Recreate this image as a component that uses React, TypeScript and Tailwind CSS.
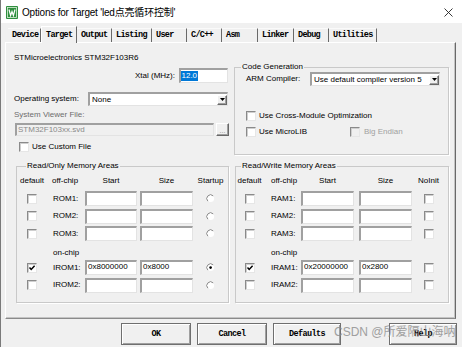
import type { ReactNode } from 'react'

// Keil uVision "Options for Target" dialog, Target tab

const sunken =
  'border-t-2 border-l-2 border-r border-b border-t-[#a0a0a0] border-l-[#a0a0a0] border-r-[#e3e3e3] border-b-[#e3e3e3]'
const raised =
  'border border-t-white border-l-white border-r-[#696969] border-b-[#696969] shadow-[inset_-1px_-1px_0_#a0a0a0]'

const TABS = [
  { label: 'Device', w: 33 },
  { label: 'Target', w: 36, active: true },
  { label: 'Output', w: 35 },
  { label: 'Listing', w: 40 },
  { label: 'User', w: 35 },
  { label: 'C/C++', w: 35 },
  { label: 'Asm', w: 36 },
  { label: 'Linker', w: 36 },
  { label: 'Debug', w: 35 },
  { label: 'Utilities', w: 48 },
]

function Check({ checked, disabled }: { checked?: boolean; disabled?: boolean }) {
  return (
    <span
      className={[
        'relative inline-block w-[10px] h-[10px] shrink-0 border border-t-[#8a8a8a] border-l-[#8a8a8a] border-r-[#e6e6e6] border-b-[#e6e6e6] shadow-[inset_1px_1px_0_#cfcfcf]',
        disabled ? 'bg-[#f0f0f0]' : 'bg-white',
      ].join(' ')}
    >
      {checked && (
        <svg viewBox="0 0 8 8" className="absolute left-0 top-0 w-[8px] h-[8px]">
          <path d="M1.5 3.5 L3.2 5.4 L6.6 1.8" fill="none" stroke="#000" strokeWidth="1.5" />
        </svg>
      )}
    </span>
  )
}

function Radio({ checked }: { checked?: boolean }) {
  return (
    <svg viewBox="0 0 9 9" className="w-[9px] h-[9px]">
      <circle cx="4.5" cy="4.5" r="3.6" fill="#fff" />
      <path d="M7.2 1.9 A3.6 3.6 0 0 0 1.9 7.2" fill="none" stroke="#8a8a8a" strokeWidth="1" />
      {checked && <circle cx="4.6" cy="4.6" r="1.3" fill="#000" />}
    </svg>
  )
}

function Field({ w, value }: { w: number; value?: string }) {
  return (
    <div
      className={`h-[15px] bg-white ${sunken} pl-[1px] text-[8px] leading-[10px] overflow-hidden`}
      style={{ width: w }}
    >
      {value}
    </div>
  )
}

function Select({ w, value }: { w: number; value: string }) {
  return (
    <div className={`h-[14px] bg-white ${sunken} flex items-center`} style={{ width: w }}>
      <span className="flex-1 pl-[2px] text-[8px] leading-[10px]">{value}</span>
      <span className={`w-[10px] h-[10px] bg-[#f0f0f0] ${raised} flex items-center justify-center`}>
        <svg viewBox="0 0 5 3" className="w-[5px] h-[3px]">
          <path d="M0 0 H5 L2.5 3 Z" fill="#000" />
        </svg>
      </span>
    </div>
  )
}

function Group({
  title,
  legendClass,
  className,
  children,
}: {
  title: string
  legendClass: string
  className: string
  children: ReactNode
}) {
  return (
    <fieldset className={`border border-[#c9c9c9] shadow-[1px_1px_0_#fff] ${className}`}>
      <legend className={`px-[1px] text-[8px] leading-[10px] ${legendClass}`}>{title}</legend>
      {children}
    </fieldset>
  )
}

function MemRow({
  cols,
  label,
  start,
  size,
  checked,
  last,
  gap,
}: {
  cols: number[]
  label: string
  start?: string
  size?: string
  checked?: boolean
  last: ReactNode
  gap: number
}) {
  return (
    <div className="flex items-center h-[15px]">
      <div className="flex justify-center" style={{ width: cols[0] }}>
        <Check checked={checked} />
      </div>
      <div className="text-[8px] leading-[10px]" style={{ width: cols[1], paddingLeft: cols[0] === 30 ? 6 : 8 }}>
        {label}
      </div>
      <Field w={cols[2]} value={start} />
      <div style={{ width: gap }} />
      <Field w={cols[3]} value={size} />
      <div className="flex justify-center" style={{ width: cols[4] }}>
        {last}
      </div>
    </div>
  )
}

function MemHeader({ cols, gap, lastLabel }: { cols: number[]; gap: number; lastLabel: string }) {
  return (
    <div className="flex items-center h-[10px] mt-[5px] text-[8px] leading-[10px]">
      <div className="text-center" style={{ width: cols[0] }}>default</div>
      <div style={{ width: cols[1], paddingLeft: cols[0] === 30 ? 5 : 8 }}>off-chip</div>
      <div className="text-center" style={{ width: cols[2] }}>Start</div>
      <div style={{ width: gap }} />
      <div className="text-center" style={{ width: cols[3] }}>Size</div>
      <div className="text-center" style={{ width: cols[4] }}>{lastLabel}</div>
    </div>
  )
}

function OnChip({ cols }: { cols: number[] }) {
  return (
    <div className="flex items-end h-[14px] text-[8px] leading-[10px]">
      <div style={{ width: cols[0] }} />
      <div style={{ paddingLeft: cols[0] === 30 ? 6 : 8 }}>on-chip</div>
    </div>
  )
}

function Button({ label }: { label: string }) {
  return (
    <div
      className="h-[22px] w-full flex items-center justify-center border border-[#6f6f6f] bg-[#f0f0f0] shadow-[inset_1px_1px_0_#fff,inset_-1px_-1px_0_#a0a0a0] font-['Liberation_Mono',monospace] font-bold text-[8.5px] tracking-[-0.6px]"
    >
      {label}
    </div>
  )
}

export default function App() {
  const romCols = [30, 38, 52, 53, 35]
  const ramCols = [27, 38, 53, 53, 33]

  return (
    <div className="relative w-[462px] h-[347px] overflow-hidden bg-[#f0f0f0] border-l border-l-[#7a7a7a] flex flex-col text-black font-['Liberation_Sans','Noto_Sans_CJK_SC',sans-serif]">
      {/* Title bar */}
      <div className="h-[23px] shrink-0 bg-white flex items-center pt-[2px]">
        <svg viewBox="0 0 12 13" className="ml-[5px] w-[12px] h-[13px]">
          <rect x="0" y="0" width="12" height="13" rx="1" fill="#2f8f3f" />
          <rect x="1.5" y="1.5" width="9" height="10" fill="none" stroke="#dff0dc" strokeWidth="0.8" />
          <path d="M3 3.5 L4.6 9.5 L6 5.5 L7.4 9.5 L9 3.5" fill="none" stroke="#fff" strokeWidth="1.2" />
        </svg>
        <span className="ml-[4px] text-[10px] leading-[12px] tracking-[-0.2px]">
          Options for Target 'led点亮循环控制'
        </span>
        <svg viewBox="0 0 9 9" className="ml-auto mr-[9px] w-[9px] h-[9px]">
          <path d="M0.5 0.5 L8.5 8.5 M8.5 0.5 L0.5 8.5" stroke="#222" strokeWidth="0.9" />
        </svg>
      </div>

      {/* Tabs */}
      <div className="h-[19px] shrink-0 flex items-end pl-[7px] font-['Liberation_Mono',monospace] font-bold text-[8.5px] tracking-[-0.7px]">
        {TABS.map((t) =>
          t.active ? (
            <div
              key={t.label}
              className="relative z-10 -mb-[1px] h-[17px] bg-[#f0f0f0] border-t border-l border-r border-t-white border-l-white border-r-[#696969] flex items-center pl-[4px]"
              style={{ width: t.w }}
            >
              {t.label}
            </div>
          ) : (
            <div
              key={t.label}
              className="h-[14px] border-t border-t-[#fafafa] border-r border-r-[#696969] flex items-center pl-[4px]"
              style={{ width: t.w }}
            >
              {t.label}
            </div>
          ),
        )}
      </div>

      {/* Tab page */}
      <div className="ml-[4px] w-[451px] h-[277px] shrink-0 border border-t-white border-l-white border-r-[#696969] border-b-[#8a8a8a] shadow-[inset_-1px_-1px_0_#c4c4c4]">
        {/* Top area */}
        <div className="flex pl-[8px]">
          <div className="w-[215px] flex flex-col">
            <div className="mt-[10px] h-[10px] text-[8px] leading-[10px]">STMicroelectronics STM32F103R6</div>

            <div className="mt-[5px] flex items-center justify-end pr-[1px]">
              <span className="text-[8px] leading-[10px]">Xtal (MHz):</span>
              <div className={`ml-[4px] w-[49px] h-[15px] bg-white ${sunken} flex items-center`}>
                <span className="bg-[#0078d7] text-white text-[8px] leading-[10px] px-[0.5px]">12.0</span>
              </div>
            </div>

            <div className="mt-[9px] flex items-center">
              <span className="w-[74px] text-[8px] leading-[10px]">Operating system:</span>
              <Select w={140} value="None" />
            </div>

            <div className="mt-[4px] h-[10px] text-[8px] leading-[10px] text-[#6d6d6d]">System Viewer File:</div>

            <div className="mt-[3px] flex items-center">
              <div className={`ml-[1px] w-[199px] h-[13px] bg-[#f0f0f0] ${sunken} pl-[1px] text-[8px] leading-[9px] text-[#8a8a8a]`}>
                STM32F103xx.svd
              </div>
              <div className={`ml-[2px] w-[13px] h-[13px] bg-[#f0f0f0] ${raised} flex items-end justify-center text-[7px] leading-[8px] text-[#8a8a8a]`}>
                ...
              </div>
            </div>

            <div className="mt-[6px] h-[10px] flex items-center pl-[5px]">
              <Check />
              <span className="ml-[3px] text-[8px] leading-[10px]">Use Custom File</span>
            </div>
          </div>

          <Group title="Code Generation" legendClass="ml-[6px]" className="ml-[5px] mt-[19px] w-[215px] h-[93px]">
            <div className="flex items-center h-[14px] pl-[11px]">
              <span className="w-[64px] text-[8px] leading-[10px]">ARM Compiler:</span>
              <Select w={130} value="Use default compiler version 5" />
            </div>
            <div className="mt-[25px] h-[10px] flex items-center pl-[11px]">
              <Check />
              <span className="ml-[3px] text-[8px] leading-[10px]">Use Cross-Module Optimization</span>
            </div>
            <div className="mt-[6px] h-[10px] flex items-center pl-[11px]">
              <div className="w-[104px] flex items-center">
                <Check />
                <span className="ml-[3px] text-[8px] leading-[10px]">Use MicroLIB</span>
              </div>
              <Check disabled />
              <span className="ml-[4px] text-[8px] leading-[10px] text-[#a0a0a0]">Big Endian</span>
            </div>
          </Group>
        </div>

        {/* Memory areas */}
        <div className="flex pl-[10px] mt-[6px]">
          <Group title="Read/Only Memory Areas" legendClass="ml-[9px]" className="w-[213px] h-[142px]">
            <MemHeader cols={romCols} gap={3} lastLabel="Startup" />
            <div className="mt-[5px] flex flex-col gap-[2.5px]">
              <MemRow cols={romCols} gap={3} label="ROM1:" last={<Radio />} />
              <MemRow cols={romCols} gap={3} label="ROM2:" last={<Radio />} />
              <MemRow cols={romCols} gap={3} label="ROM3:" last={<Radio />} />
              <OnChip cols={romCols} />
              <MemRow cols={romCols} gap={3} label="IROM1:" start="0x8000000" size="0x8000" checked last={<Radio checked />} />
              <MemRow cols={romCols} gap={3} label="IROM2:" last={<Radio />} />
            </div>
          </Group>

          <Group title="Read/Write Memory Areas" legendClass="ml-[5px]" className="ml-[6px] w-[214px] h-[142px]">
            <MemHeader cols={ramCols} gap={5} lastLabel="NoInit" />
            <div className="mt-[5px] flex flex-col gap-[2.5px]">
              <MemRow cols={ramCols} gap={5} label="RAM1:" last={<Check />} />
              <MemRow cols={ramCols} gap={5} label="RAM2:" last={<Check />} />
              <MemRow cols={ramCols} gap={5} label="RAM3:" last={<Check />} />
              <OnChip cols={ramCols} />
              <MemRow cols={ramCols} gap={5} label="IRAM1:" start="0x20000000" size="0x2800" checked last={<Check />} />
              <MemRow cols={ramCols} gap={5} label="IRAM2:" last={<Check />} />
            </div>
          </Group>
        </div>
      </div>

      {/* Buttons */}
      <div className="mt-[4px] flex">
        <div className="ml-[120px] w-[70px]"><Button label="OK" /></div>
        <div className="ml-[6px] w-[70px]"><Button label="Cancel" /></div>
        <div className="ml-[6px] w-[68px]"><Button label="Defaults" /></div>
        <div className="ml-[48px] w-[68px]"><Button label="Help" /></div>
      </div>

      {/* CSDN watermark */}
      <div className="absolute left-[333px] top-[325px] text-[12px] leading-[14px] text-[#8c8c8c] opacity-80 pointer-events-none">
        CSDN @所爱隔山海呐
      </div>
    </div>
  )
}
